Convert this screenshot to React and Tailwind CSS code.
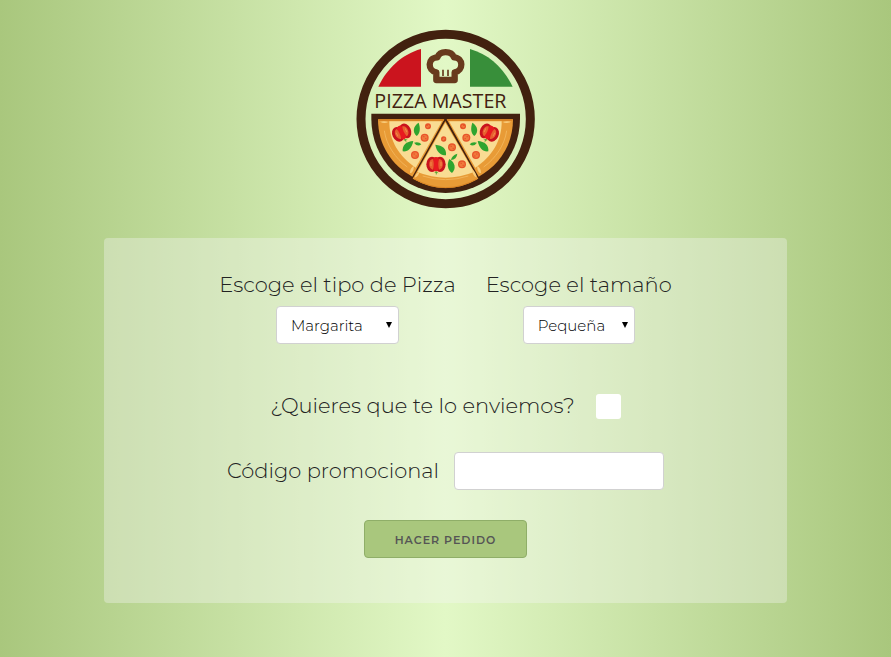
import React from "react";

function Tomato({ x, y, angle }) {
  return (
    <g transform={`translate(${x} ${y}) rotate(${angle})`}>
      <path d="M0 20 l-5 5 4 0 1 8 3 -7 5 1z" fill="#5aa832" />
      <ellipse cx="-12" cy="0" rx="17" ry="23" fill="#c9121d" />
      <ellipse cx="12" cy="0" rx="17" ry="23" fill="#c9121d" />
      <rect x="-8" y="-22" width="16" height="43" rx="7" fill="#e8191f" />
      <path d="M-9 -16 C-24 -16 -24 15 -9 16 C-6 6 -6 -6 -9 -16z" fill="#e8602f" />
      <path d="M9 -16 C24 -16 24 15 9 16 C6 6 6 -6 9 -16z" fill="#e8602f" />
      <path d="M-15 -7v12M15 -7v12" stroke="#f08a4d" strokeWidth="3" />
    </g>
  );
}

function Pepperoni({ x, y, r }) {
  return (
    <g>
      <circle cx={x} cy={y} r={r} fill="#e8542a" />
      <circle cx={x} cy={y} r={r - 4} fill="#f07a3c" />
      <path d={`M${x - 4} ${y - 3}h3M${x + 2} ${y + 3}h3`} stroke="#e04020" strokeWidth="3" />
    </g>
  );
}

function Leaf({ d }) {
  return <path d={d} fill="#2fa52f" />;
}

function SideSlice() {
  return (
    <g>
      <path d="M84 28 H283 L187 200 C125 166 84 105 84 28z" fill="#e89b36" />
      <path d="M84 28 H283 L280 33 H87z" fill="#d98424" />
      <path d="M118 34 H276 L197 173 C148 141 117 92 118 34z" fill="#f9dc93" />
      <path d="M103 62 C109 105 136 145 172 171" fill="none" stroke="#f2b458" strokeWidth="3" />
      <path d="M90 35 q14 -3 25 1 q-12 6 -25 -1z" fill="#f9cd7c" />
      <path d="M180 188 q0 -13 11 -20 q2 13 -8 22z" fill="#f9cd7c" />
      <Tomato x={155} y={68} angle={-25} />
      <Leaf d="M206 38 C212 56 210 70 200 78 C186 65 190 48 206 38z" />
      <Leaf d="M190 93 C185 115 174 126 158 124 C156 106 169 94 190 93z" />
      <Leaf d="M192 98 Q207 94 214 103 Q202 112 192 98z" />
      <Pepperoni x={234} y={49} r={9} />
      <Pepperoni x={224} y={83} r={12} />
      <Pepperoni x={195} y={135} r={12} />
    </g>
  );
}

function Logo() {
  return (
    <svg viewBox="18 12 540 540" className="size-[180px]" role="img" aria-label="Pizza Master">
      <circle cx="287" cy="282" r="254" fill="none" stroke="#42210f" strokeWidth="27" />
      <path d="M213 72 V185 H85 C110 132 155 88 213 72z" fill="#cb141e" />
      <path d="M360 72 V185 H488 C463 132 418 88 360 72z" fill="#388f3a" />
      <path
        d="M259 165 V142 C232 137 232 98 262 97 C270 76 304 76 312 97 C341 98 341 137 314 142 V165z"
        fill="none"
        stroke="#683a1d"
        strokeWidth="19"
        strokeLinejoin="round"
      />
      <path d="M279 134v19M294 134v19" stroke="#683a1d" strokeWidth="5" />
      <text x="73" y="249" fontSize="59" fill="#42210f" className="font-['Open_Sans',sans-serif] font-normal">
        PIZZA MASTER
      </text>
      <g transform="translate(0 255)">
        <path d="M64 11 H510 V27 A223 222 0 0 1 64 27z" fill="#42210f" />
        <SideSlice />
        <g transform="translate(573 0) scale(-1 1)">
          <SideSlice />
        </g>
        <path d="M286 33 L385 206 Q287 262 188 206z" fill="#e89b36" />
        <path d="M193 207 Q287 259 381 207" fill="none" stroke="#d98424" strokeWidth="3" />
        <path d="M286 38 L372 186 Q287 220 202 186z" fill="#f9dc93" />
        <path d="M218 198 Q287 220 355 198" fill="none" stroke="#f2b458" strokeWidth="3" />
        <path d="M194 203 q3 -15 14 -17 q-1 12 -14 17z" fill="#f9cd7c" />
        <path d="M380 203 q-14 -7 -14 -25 q12 8 14 25z" fill="#f9cd7c" />
        <Tomato x={258} y={163} angle={0} />
        <Leaf d="M256 104 C278 106 290 116 288 136 C270 136 259 124 256 104z" />
        <Leaf d="M298 147 C316 158 319 176 306 189 C292 180 290 162 298 147z" />
        <Leaf d="M322 131 Q320 149 303 150 Q305 136 322 131z" />
        <Pepperoni x={281} y={87} r={8} />
        <Pepperoni x={306} y={112} r={12} />
        <Pepperoni x={336} y={163} r={12} />
      </g>
    </svg>
  );
}

function SelectField({ id, label, options, width }) {
  return (
    <div className="flex flex-col items-center gap-1.5">
      <label htmlFor={id} className="text-[21px] leading-[30px]">
        {label}
      </label>
      <div className="relative">
        <select
          id={id}
          className={`${width} h-[38px] appearance-none rounded border border-[#d1d1d1] bg-white pt-0.5 pl-3.5 text-[15px] text-black`}
        >
          {options.map((option) => (
            <option key={option}>{option}</option>
          ))}
        </select>
        <svg viewBox="0 0 6 6" className="pointer-events-none absolute top-4 right-[7px] size-1.5">
          <path d="M0 0h6L3 6z" />
        </svg>
      </div>
    </div>
  );
}

export default function App() {
  return (
    <div className="flex min-h-screen flex-col items-center bg-linear-to-r from-[#a9c77d] via-[#e2f8c6] to-[#a9c77d] px-26 pt-[29px] pb-[54px] font-[Montserrat,Inter,sans-serif] font-light text-[#222]">
      <Logo />
      <form
        onSubmit={(event) => event.preventDefault()}
        className="mt-[29px] flex w-full flex-col items-center rounded bg-[#f5f5f5]/35 pt-8 pb-[45px]"
      >
        <div className="flex flex-wrap justify-center gap-x-[30px] gap-y-6">
          <SelectField
            id="pizza"
            label="Escoge el tipo de Pizza"
            options={["Margarita", "Barbacoa", "Cuatro quesos"]}
            width="w-[123px]"
          />
          <SelectField
            id="size"
            label="Escoge el tamaño"
            options={["Pequeña", "Mediana", "Familiar"]}
            width="w-28"
          />
        </div>
        <div className="mt-[47px] flex items-center gap-[21px]">
          <label htmlFor="delivery" className="text-[21px] leading-[30px]">
            ¿Quieres que te lo enviemos?
          </label>
          <input id="delivery" type="checkbox" className="size-[25px] appearance-none rounded-[3px] bg-white checked:bg-[#6b9a3a]" />
        </div>
        <div className="mt-[31px] flex items-center gap-[15px]">
          <label htmlFor="code" className="text-[21px] leading-[30px]">
            Código promocional
          </label>
          <input
            id="code"
            type="text"
            className="h-[38px] w-[210px] rounded border border-[#d1d1d1] bg-white px-2.5 text-[15px]"
          />
        </div>
        <button
          type="submit"
          className="mt-[30px] h-[38px] w-[163px] rounded border border-[#8fae68] bg-[#a9c77d] pt-0.5 text-[11px] font-semibold tracking-[1px] text-[#555] uppercase"
        >
          Hacer pedido
        </button>
      </form>
    </div>
  );
}
